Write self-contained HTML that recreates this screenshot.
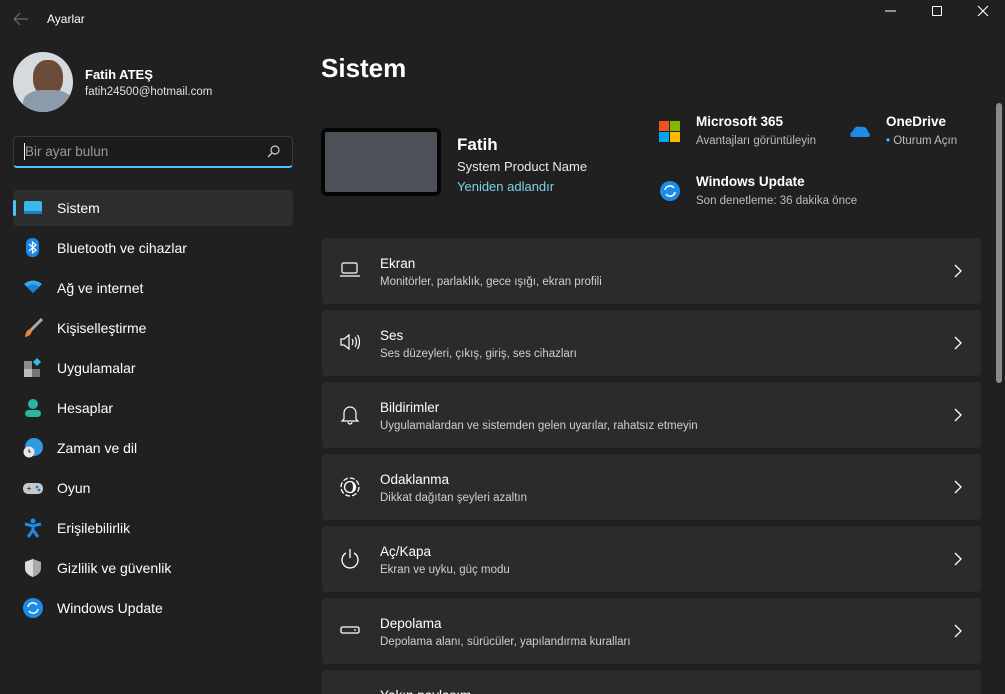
<!DOCTYPE html>
<html style="width:1005px;height:694px;overflow:hidden"><head><meta charset="utf-8"><style>
*{margin:0;padding:0;box-sizing:border-box}
body{width:1005px;height:694px;background:#202020;font-family:"Segoe UI","Liberation Sans",sans-serif;color:#fff;position:relative;overflow:hidden}
.a{position:absolute}
.nav{position:absolute;left:13px;width:280px;height:36px;font-size:14px;line-height:36px;padding-left:44px;color:#fff}
.nav svg{position:absolute;left:10px;top:8px}
.card{position:absolute;left:322px;width:659px;height:66px;background:#2b2b2b;border-radius:4px}
.card .t{position:absolute;left:58px;top:18px;font-size:13.5px;color:#fff}
.card .s{position:absolute;left:58px;top:38px;font-size:11.5px;color:#cfcfcf}
.card .ic{position:absolute;left:17px;top:22px}
.card .ch{position:absolute;right:18px;top:26px}
</style></head><body>
<svg class="a" style="left:13px;top:12px" width="16" height="14"><path d="M1 7H15M1 7L7 1M1 7L7 13" stroke="#6a6a6a" stroke-width="1.2" fill="none"/></svg>
<div class="a" style="left:47px;top:12px;font-size:12px">Ayarlar</div>
<svg class="a" style="left:885px;top:10px" width="12" height="2"><path d="M0 1H11" stroke="#fff"/></svg>
<div class="a" style="left:932px;top:6px;width:10px;height:10px;border:1px solid #fff;border-radius:1px"></div>
<svg class="a" style="left:977px;top:5px" width="12" height="12"><path d="M1 1L11 11M11 1L1 11" stroke="#fff" stroke-width="1.1"/></svg>

<div class="a" style="left:13px;top:52px;width:60px;height:60px;border-radius:50%;overflow:hidden;background:#d6dadd">
<div class="a" style="left:20px;top:8px;width:30px;height:36px;border-radius:45%;background:#6b4a38"></div>
<div class="a" style="left:10px;top:38px;width:50px;height:30px;border-radius:40%;background:#8a9cab"></div>
</div>
<div class="a" style="left:85px;top:67px;font-size:13px;font-weight:bold">Fatih ATEŞ</div>
<div class="a" style="left:85px;top:86px;font-size:11.5px;color:#e0e0e0">fatih24500@hotmail.com</div>

<div class="a" style="left:13px;top:136px;width:280px;height:32px;background:#1c1c1c;border:1px solid #3a3a3a;border-bottom:2px solid #4cc2ff;border-radius:4px"></div>
<div class="a" style="left:24px;top:143px;width:1px;height:17px;background:#fff"></div>
<div class="a" style="left:25px;top:144px;font-size:13.5px;color:#9a9a9a">Bir ayar bulun</div>
<svg class="a" style="left:267px;top:145px" width="13" height="13"><circle cx="8" cy="5" r="4" stroke="#ccc" fill="none" stroke-width="1.2"/><path d="M5 8L1 12" stroke="#ccc" stroke-width="1.3"/></svg>

<div class="a" style="left:13px;top:190px;width:280px;height:36px;background:#2d2d2d;border-radius:4px"></div>
<div class="a" style="left:13px;top:200px;width:3px;height:16px;background:#4cc2ff;border-radius:2px"></div>
<div class="nav" style="top:190px"><svg width="20" height="20"><rect x="1" y="3" width="18" height="12" rx="2" fill="#3ab8ec"/><rect x="1" y="13" width="18" height="3" fill="#1e7fb8"/></svg>Sistem</div>
<div class="nav" style="top:230px"><svg width="20" height="20"><rect x="3" y="0" width="13" height="19" rx="6" fill="#1a86e8"/><path d="M6 6L13 12L9.5 15V4L13 7L6 13" stroke="#fff" fill="none" stroke-width="1.2"/></svg>Bluetooth ve cihazlar</div>
<div class="nav" style="top:270px"><svg width="20" height="20"><path d="M1 6Q10 -1 19 6L10 15Z" fill="#3aa8ec"/><path d="M4 9Q10 4 16 9L10 15Z" fill="#1c7fd6"/></svg>Ağ ve internet</div>
<div class="nav" style="top:310px"><svg width="20" height="20"><path d="M19 1L8 12" stroke="#aaa" stroke-width="3"/><path d="M8 11Q3 11 2 19Q8 18 9 13Z" fill="#e8883a"/></svg>Kişiselleştirme</div>
<div class="nav" style="top:350px"><svg width="20" height="20"><rect x="1" y="3" width="8" height="8" fill="#8a8a8a"/><rect x="1" y="11" width="8" height="8" fill="#bbb"/><rect x="9" y="11" width="8" height="8" fill="#777"/><path d="M14 0L18 4L14 8L10 4Z" fill="#3ab8ec"/></svg>Uygulamalar</div>
<div class="nav" style="top:390px"><svg width="20" height="20"><circle cx="10" cy="6" r="5" fill="#2bb5a0"/><rect x="2" y="12" width="16" height="7" rx="3.5" fill="#2bb5a0"/></svg>Hesaplar</div>
<div class="nav" style="top:430px"><svg width="20" height="20"><circle cx="11" cy="9" r="9" fill="#2e9be0"/><circle cx="6" cy="14" r="5.5" fill="#e8e8e8"/><path d="M6 11V14H8" stroke="#333" fill="none"/></svg>Zaman ve dil</div>
<div class="nav" style="top:470px"><svg width="20" height="20"><rect x="0" y="5" width="20" height="11" rx="5" fill="#c8c8c8"/><circle cx="14" cy="9" r="1.4" fill="#1c7fd6"/><circle cx="16" cy="12" r="1.4" fill="#1c7fd6"/><path d="M4 10.5H8M6 8.5V12.5" stroke="#555"/></svg>Oyun</div>
<div class="nav" style="top:510px"><svg width="20" height="20"><circle cx="10" cy="3" r="2.5" fill="#1c8ce8"/><path d="M2 6L10 8L18 6M10 8V12L5 19M10 12L15 19" stroke="#1c8ce8" stroke-width="3" fill="none"/></svg>Erişilebilirlik</div>
<div class="nav" style="top:550px"><svg width="20" height="20"><path d="M10 1L18 4V10Q18 16 10 19Q2 16 2 10V4Z" fill="#aaa"/><path d="M10 1V19Q2 16 2 10V4Z" fill="#ddd"/></svg>Gizlilik ve güvenlik</div>
<div class="nav" style="top:590px"><svg width="20" height="20"><circle cx="10" cy="10" r="10" fill="#1c8ce8"/><path d="M5 9A5 5 0 0 1 14 7M15 11A5 5 0 0 1 6 13" stroke="#fff" stroke-width="1.5" fill="none"/></svg>Windows Update</div>

<div class="a" style="left:321px;top:53px;font-size:26px;font-weight:600">Sistem</div>
<div class="a" style="left:321px;top:128px;width:120px;height:68px;background:#4b5157;border:4px solid #050505;border-radius:6px"></div>
<div class="a" style="left:457px;top:135px;font-size:17px;font-weight:600">Fatih</div>
<div class="a" style="left:457px;top:159px;font-size:13px;color:#e8e8e8">System Product Name</div>
<div class="a" style="left:457px;top:179px;font-size:13px;color:#7fcfe8">Yeniden adlandır</div>

<svg class="a" style="left:659px;top:121px" width="22" height="22"><rect x="0" y="0" width="10" height="10" fill="#f25022"/><rect x="11" y="0" width="10" height="10" fill="#7fba00"/><rect x="0" y="11" width="10" height="10" fill="#00a4ef"/><rect x="11" y="11" width="10" height="10" fill="#ffb900"/></svg>
<div class="a" style="left:696px;top:114px;font-size:13.5px;font-weight:600">Microsoft 365</div>
<div class="a" style="left:696px;top:135px;font-size:11.5px;color:#bdbdbd">Avantajları görüntüleyin</div>
<svg class="a" style="left:849px;top:123px" width="22" height="16"><path d="M2 14Q0 10 4 8Q6 2 12 4Q18 3 19 9Q22 11 20 14Z" fill="#1c8ce8"/></svg>
<div class="a" style="left:886px;top:114px;font-size:13.5px;font-weight:600">OneDrive</div>
<div class="a" style="left:886px;top:135px;font-size:11.5px;color:#bdbdbd"><span style="color:#4cc2ff">•</span> Oturum Açın</div>
<svg class="a" style="left:660px;top:181px" width="20" height="20"><circle cx="10" cy="10" r="10" fill="#1c8ce8"/><path d="M5 9A5 5 0 0 1 14 7M15 11A5 5 0 0 1 6 13" stroke="#fff" stroke-width="1.5" fill="none"/></svg>
<div class="a" style="left:696px;top:174px;font-size:13.5px;font-weight:600">Windows Update</div>
<div class="a" style="left:696px;top:195px;font-size:11.5px;color:#bdbdbd">Son denetleme: 36 dakika önce</div>

<div class="a" style="left:996px;top:103px;width:6px;height:280px;background:#8a8a8a;border-radius:3px"></div>

<div class="card" style="top:238px"><svg class="ic" width="22" height="20"><rect x="3" y="3" width="15" height="10" rx="1.5" stroke="#fff" fill="none" stroke-width="1.2"/><path d="M1 16H21" stroke="#fff" stroke-width="1.2"/></svg><div class="t">Ekran</div><div class="s">Monitörler, parlaklık, gece ışığı, ekran profili</div><svg class="ch" width="10" height="14"><path d="M2 1L8 7L2 13" stroke="#fff" fill="none" stroke-width="1.3"/></svg></div>
<div class="card" style="top:310px"><svg class="ic" width="22" height="20"><path d="M2 7H5L10 3V17L5 13H2Z" stroke="#fff" fill="none" stroke-width="1.2"/><path d="M13 7Q15 10 13 13M16 5Q19 10 16 15M18.5 3Q22.5 10 18.5 17" stroke="#fff" fill="none" stroke-width="1.2"/></svg><div class="t">Ses</div><div class="s">Ses düzeyleri, çıkış, giriş, ses cihazları</div><svg class="ch" width="10" height="14"><path d="M2 1L8 7L2 13" stroke="#fff" fill="none" stroke-width="1.3"/></svg></div>
<div class="card" style="top:382px"><svg class="ic" width="22" height="22"><path d="M5 15V9A6 6 0 0 1 17 9V15L19 17H3Z" stroke="#fff" fill="none" stroke-width="1.2"/><path d="M9 18A2 2 0 0 0 13 18" stroke="#fff" fill="none" stroke-width="1.2"/></svg><div class="t">Bildirimler</div><div class="s">Uygulamalardan ve sistemden gelen uyarılar, rahatsız etmeyin</div><svg class="ch" width="10" height="14"><path d="M2 1L8 7L2 13" stroke="#fff" fill="none" stroke-width="1.3"/></svg></div>
<div class="card" style="top:454px"><svg class="ic" width="22" height="22"><circle cx="11" cy="11" r="9" stroke="#fff" fill="none" stroke-width="1.3" stroke-dasharray="5 2"/><circle cx="11" cy="11" r="5.5" stroke="#fff" fill="none" stroke-width="1.3"/><path d="M11 5.5A5.5 5.5 0 0 1 11 16.5A3 5.5 0 0 0 11 5.5" fill="#fff"/></svg><div class="t">Odaklanma</div><div class="s">Dikkat dağıtan şeyleri azaltın</div><svg class="ch" width="10" height="14"><path d="M2 1L8 7L2 13" stroke="#fff" fill="none" stroke-width="1.3"/></svg></div>
<div class="card" style="top:526px"><svg class="ic" width="22" height="22"><path d="M7 5A8 8 0 1 0 15 5M11 1V10" stroke="#fff" fill="none" stroke-width="1.3"/></svg><div class="t">Aç/Kapa</div><div class="s">Ekran ve uyku, güç modu</div><svg class="ch" width="10" height="14"><path d="M2 1L8 7L2 13" stroke="#fff" fill="none" stroke-width="1.3"/></svg></div>
<div class="card" style="top:598px"><svg class="ic" width="22" height="20"><rect x="2" y="7" width="18" height="6" rx="1.5" stroke="#fff" fill="none" stroke-width="1.3"/><circle cx="16" cy="10" r="0.9" fill="#fff"/></svg><div class="t">Depolama</div><div class="s">Depolama alanı, sürücüler, yapılandırma kuralları</div><svg class="ch" width="10" height="14"><path d="M2 1L8 7L2 13" stroke="#fff" fill="none" stroke-width="1.3"/></svg></div>
<div class="card" style="top:670px;height:24px;border-radius:4px 4px 0 0;overflow:hidden"><div class="t">Yakın paylaşım</div></div>
</body></html>
